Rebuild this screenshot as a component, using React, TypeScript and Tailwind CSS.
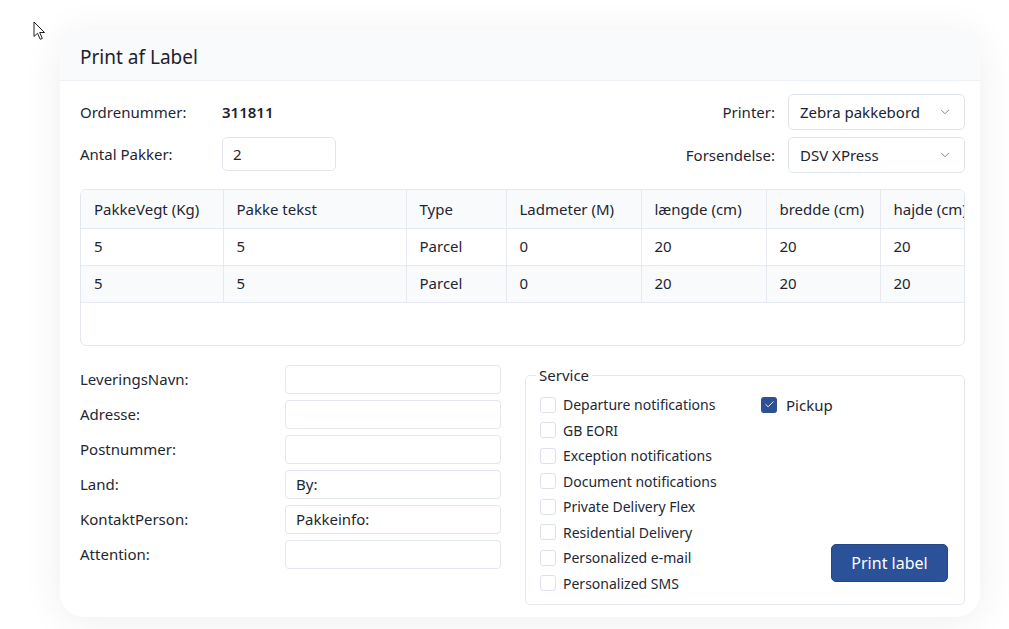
import { ChevronDown, Check } from 'lucide-react'

const font = { fontFamily: '"Noto Sans", "Open Sans", sans-serif' }

const columns = [
  { label: 'PakkeVegt (Kg)', w: 'w-[142px]' },
  { label: 'Pakke tekst', w: 'w-[183px]' },
  { label: 'Type', w: 'w-[100px]' },
  { label: 'Ladmeter (M)', w: 'w-[135px]' },
  { label: 'længde (cm)', w: 'w-[125px]' },
  { label: 'bredde (cm)', w: 'w-[114px]' },
  { label: 'hajde (cm)', w: 'w-[120px]' },
]

const rows = [
  ['5', '5', 'Parcel', '0', '20', '20', '20'],
  ['5', '5', 'Parcel', '0', '20', '20', '20'],
]

const fields = [
  { label: 'LeveringsNavn:', value: '' },
  { label: 'Adresse:', value: '' },
  { label: 'Postnummer:', value: '' },
  { label: 'Land:', value: 'By:' },
  { label: 'KontaktPerson:', value: 'Pakkeinfo:' },
  { label: 'Attention:', value: '' },
]

const services = [
  'Departure notifications',
  'GB EORI',
  'Exception notifications',
  'Document notifications',
  'Private Delivery Flex',
  'Residential Delivery',
  'Personalized e-mail',
  'Personalized SMS',
]

function Box({ checked }: { checked?: boolean }) {
  return checked ? (
    <span className="w-4 h-4 rounded-[3px] bg-[#2c4f96] flex items-center justify-center shrink-0">
      <Check size={11} strokeWidth={2} className="text-white" />
    </span>
  ) : (
    <span className="w-4 h-4 rounded-[3px] border border-[#dde2ea] bg-white shrink-0" />
  )
}

function Select({ value }: { value: string }) {
  return (
    <div className="w-[177px] h-[36px] border border-[#e1e6ee] rounded-[5px] bg-white flex items-center justify-between pl-[11px] pr-[12px] text-[15px] text-[#1c2330]">
      <span>{value}</span>
      <ChevronDown size={14} strokeWidth={1.5} className="text-[#6b7280]" />
    </div>
  )
}

export default function App() {
  return (
    <div className="relative h-[629px] w-[1009px] bg-white pt-[30px] pl-[60px] overflow-hidden" style={font}>
      {/* mouse pointer */}
      <svg className="absolute left-[33px] top-[21px]" width="14" height="20" viewBox="0 0 14 20">
        <path d="M1 1 L1 15.5 L4.5 12.3 L7.2 18.3 L9.3 17.4 L6.7 11.5 L11.5 11.5 Z" fill="white" stroke="#222" strokeWidth="1" strokeLinejoin="round" />
      </svg>

      <div className="w-[920px] h-[587px] rounded-[24px] bg-white shadow-[0_4px_40px_rgba(0,0,0,0.07)] overflow-hidden">
        <div className="h-[51px] bg-[#f9fafc] border-b border-[#edf0f5] flex items-center px-5 pt-[4px]">
          <h1 className="text-[19px] text-[#1c2330]">Print af Label</h1>
        </div>

        <div className="pl-5 pr-[15px] pt-[13px] text-[15px] text-[#1f2632]">
          <div className="flex justify-between">
            <div className="flex flex-col gap-[7px]">
              <div className="h-[36px] flex items-center">
                <span className="w-[142px]">Ordrenummer:</span>
                <span className="font-semibold text-[#1c2330]">311811</span>
              </div>
              <div className="h-[34px] flex items-center">
                <span className="w-[142px]">Antal Pakker:</span>
                <div className="w-[114px] h-[34px] border border-[#e1e6ee] rounded-[5px] flex items-center px-[10px]">2</div>
              </div>
            </div>
            <div className="flex flex-col gap-[7px]">
              <div className="flex items-center justify-end gap-[13px]">
                <span>Printer:</span>
                <Select value="Zebra pakkebord" />
              </div>
              <div className="flex items-center justify-end gap-[13px]">
                <span>Forsendelse:</span>
                <Select value="DSV XPress" />
              </div>
            </div>
          </div>

          <div className="mt-[16px] h-[157px] border border-[#e3e8ef] rounded-[6px] overflow-hidden">
            <table className="table-fixed border-collapse w-[919px]">
              <thead>
                <tr className="bg-[#f8fafc] h-[38px] border-b border-[#e6eaf0]">
                  {columns.map((c, i) => (
                    <th key={c.label} className={`${c.w} text-left font-normal pl-[13px] whitespace-nowrap ${i > 0 ? 'border-l border-[#e6eaf0]' : ''}`}>
                      {c.label}
                    </th>
                  ))}
                </tr>
              </thead>
              <tbody>
                {rows.map((r, ri) => (
                  <tr key={ri} className={`h-[37px] border-b border-[#e6eaf0] ${ri % 2 === 1 ? 'bg-[#f8fafc]' : 'bg-white'}`}>
                    {r.map((v, i) => (
                      <td key={i} className={`pl-[13px] ${i > 0 ? 'border-l border-[#e6eaf0]' : ''}`}>{v}</td>
                    ))}
                  </tr>
                ))}
              </tbody>
            </table>
          </div>

          <div className="flex gap-6 mt-[19px]">
            <div className="flex flex-col gap-[6px]">
              {fields.map((f) => (
                <div key={f.label} className="h-[29px] flex items-center">
                  <span className="w-[205px]">{f.label}</span>
                  <div className="w-[216px] h-[29px] border border-[#e3e8ef] rounded-[4px] flex items-center px-[10px]">{f.value}</div>
                </div>
              ))}
            </div>

            <fieldset className="flex-1 h-[240px] border border-[#e3e8ef] rounded-[5px] pl-[14px] pr-[16px] pb-[8px] min-w-0">
              <legend className="-ml-[4px] px-[3px] text-[15px] leading-5">Service</legend>
              <div className="flex pt-[7px] h-full">
                <div className="w-[221px] flex flex-col text-[14px] text-[#222936]">
                  {services.map((s) => (
                    <label key={s} className="h-[25.5px] flex items-center gap-[7px]">
                      <Box />
                      <span>{s}</span>
                    </label>
                  ))}
                </div>
                <div className="flex-1 flex flex-col justify-between items-start pb-[14px]">
                  <label className="h-[25.5px] flex items-center gap-[9px] text-[15px]">
                    <Box checked />
                    <span>Pickup</span>
                  </label>
                  <button className="self-end w-[117px] h-[38px] rounded-[5px] bg-[#2b5199] border border-[#244684] text-white text-[16px]">
                    Print label
                  </button>
                </div>
              </div>
            </fieldset>
          </div>
        </div>
      </div>
    </div>
  )
}
